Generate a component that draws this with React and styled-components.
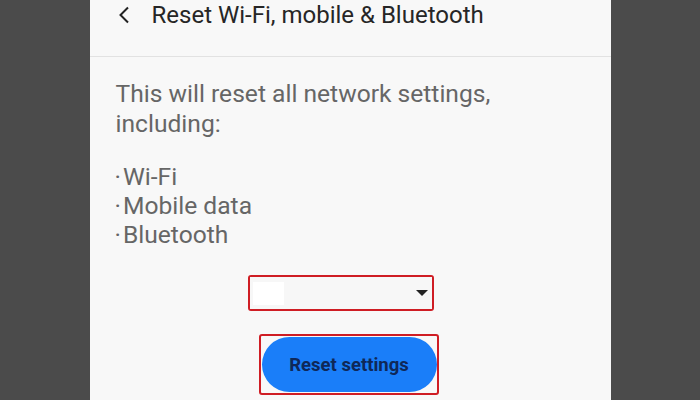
import React from 'react';
import styled, { createGlobalStyle } from 'styled-components';

const Global = createGlobalStyle`
  html, body { margin: 0; padding: 0; }
  body {
    background: #4b4b4b;
    font-family: Roboto, "Noto Sans", sans-serif;
    width: 700px;
    height: 400px;
    overflow: hidden;
  }
`;

const Panel = styled.div`
  width: 521px;
  height: 400px;
  margin: 0 auto;
  background: #f8f8f8;
  display: flex;
  flex-direction: column;
`;

const Header = styled.div`
  height: 57px;
  border-bottom: 1px solid #e2e2e2;
  display: flex;
  align-items: flex-start;
  padding: 0 0 0 27px;
  box-sizing: border-box;
`;

const BackBtn = styled.button`
  border: none;
  background: none;
  padding: 0;
  margin: 6px 21px 0 0;
  width: 14px;
  height: 18px;
  display: flex;
  align-items: center;
  justify-content: center;
`;

const Title = styled.h1`
  margin: 0;
  font-size: 24px;
  font-weight: 400;
  color: #262626;
  line-height: 30px;
`;

const Body = styled.div`
  padding: 22px 26px 0 26px;
  display: flex;
  flex-direction: column;
`;

const Lead = styled.p`
  margin: 0;
  font-size: 24.6px;
  line-height: 30px;
  color: #666;
`;

const List = styled.ul`
  list-style: none;
  margin: 23px 0 0 0;
  padding: 0;
`;

const Item = styled.li`
  font-size: 24.6px;
  line-height: 29px;
  color: #666;
  display: flex;
  &::before {
    content: '·';
    margin: 0 2px 0 -1px;
  }
`;

const Highlight = styled.div`
  border: 2px solid #cf1d24;
  border-radius: 3px;
  box-sizing: border-box;
  align-self: flex-start;
  margin-left: ${p => p.$ml || 0};
`;

const Select = styled.div`
  width: 182px;
  height: 32px;
  display: flex;
  align-items: center;
  justify-content: space-between;
  padding: 0 4px 0 3px;
  box-sizing: border-box;
  background: #f7f7f7;
`;

const Blank = styled.span`
  width: 31px;
  height: 23px;
  background: #fff;
`;

const Caret = styled.span`
  width: 0;
  height: 0;
  border-left: 6px solid transparent;
  border-right: 6px solid transparent;
  border-top: 6px solid #222;
`;

const Actions = styled.div`
  display: flex;
  flex-direction: column;
  margin-top: 26px;
  gap: 23px;
`;

const ResetBtn = styled.button`
  display: block;
  margin: 1px 0 1px 1px;
  width: 175px;
  height: 55px;
  border: none;
  border-radius: 28px;
  background: #1a7ef9;
  color: #0f2858;
  font-family: Roboto, sans-serif;
  font-weight: 700;
  font-size: 18.5px;
`;

export default function App() {
  return (
    <>
      <Global />
      <Panel>
        <Header>
          <BackBtn aria-label="Back">
            <svg width="12" height="18" viewBox="0 0 12 18">
              <path d="M10 1.5 L2.5 9 L10 16.5" fill="none" stroke="#222" strokeWidth="2" />
            </svg>
          </BackBtn>
          <Title>Reset Wi-Fi, mobile &amp; Bluetooth</Title>
        </Header>
        <Body>
          <Lead>This will reset all network settings, including:</Lead>
          <List>
            <Item>Wi-Fi</Item>
            <Item>Mobile data</Item>
            <Item>Bluetooth</Item>
          </List>
        </Body>
        <Actions>
          <Highlight $ml="158px">
            <Select>
              <Blank />
              <Caret />
            </Select>
          </Highlight>
          <Highlight $ml="169px">
            <ResetBtn>Reset settings</ResetBtn>
          </Highlight>
        </Actions>
      </Panel>
    </>
  );
}
